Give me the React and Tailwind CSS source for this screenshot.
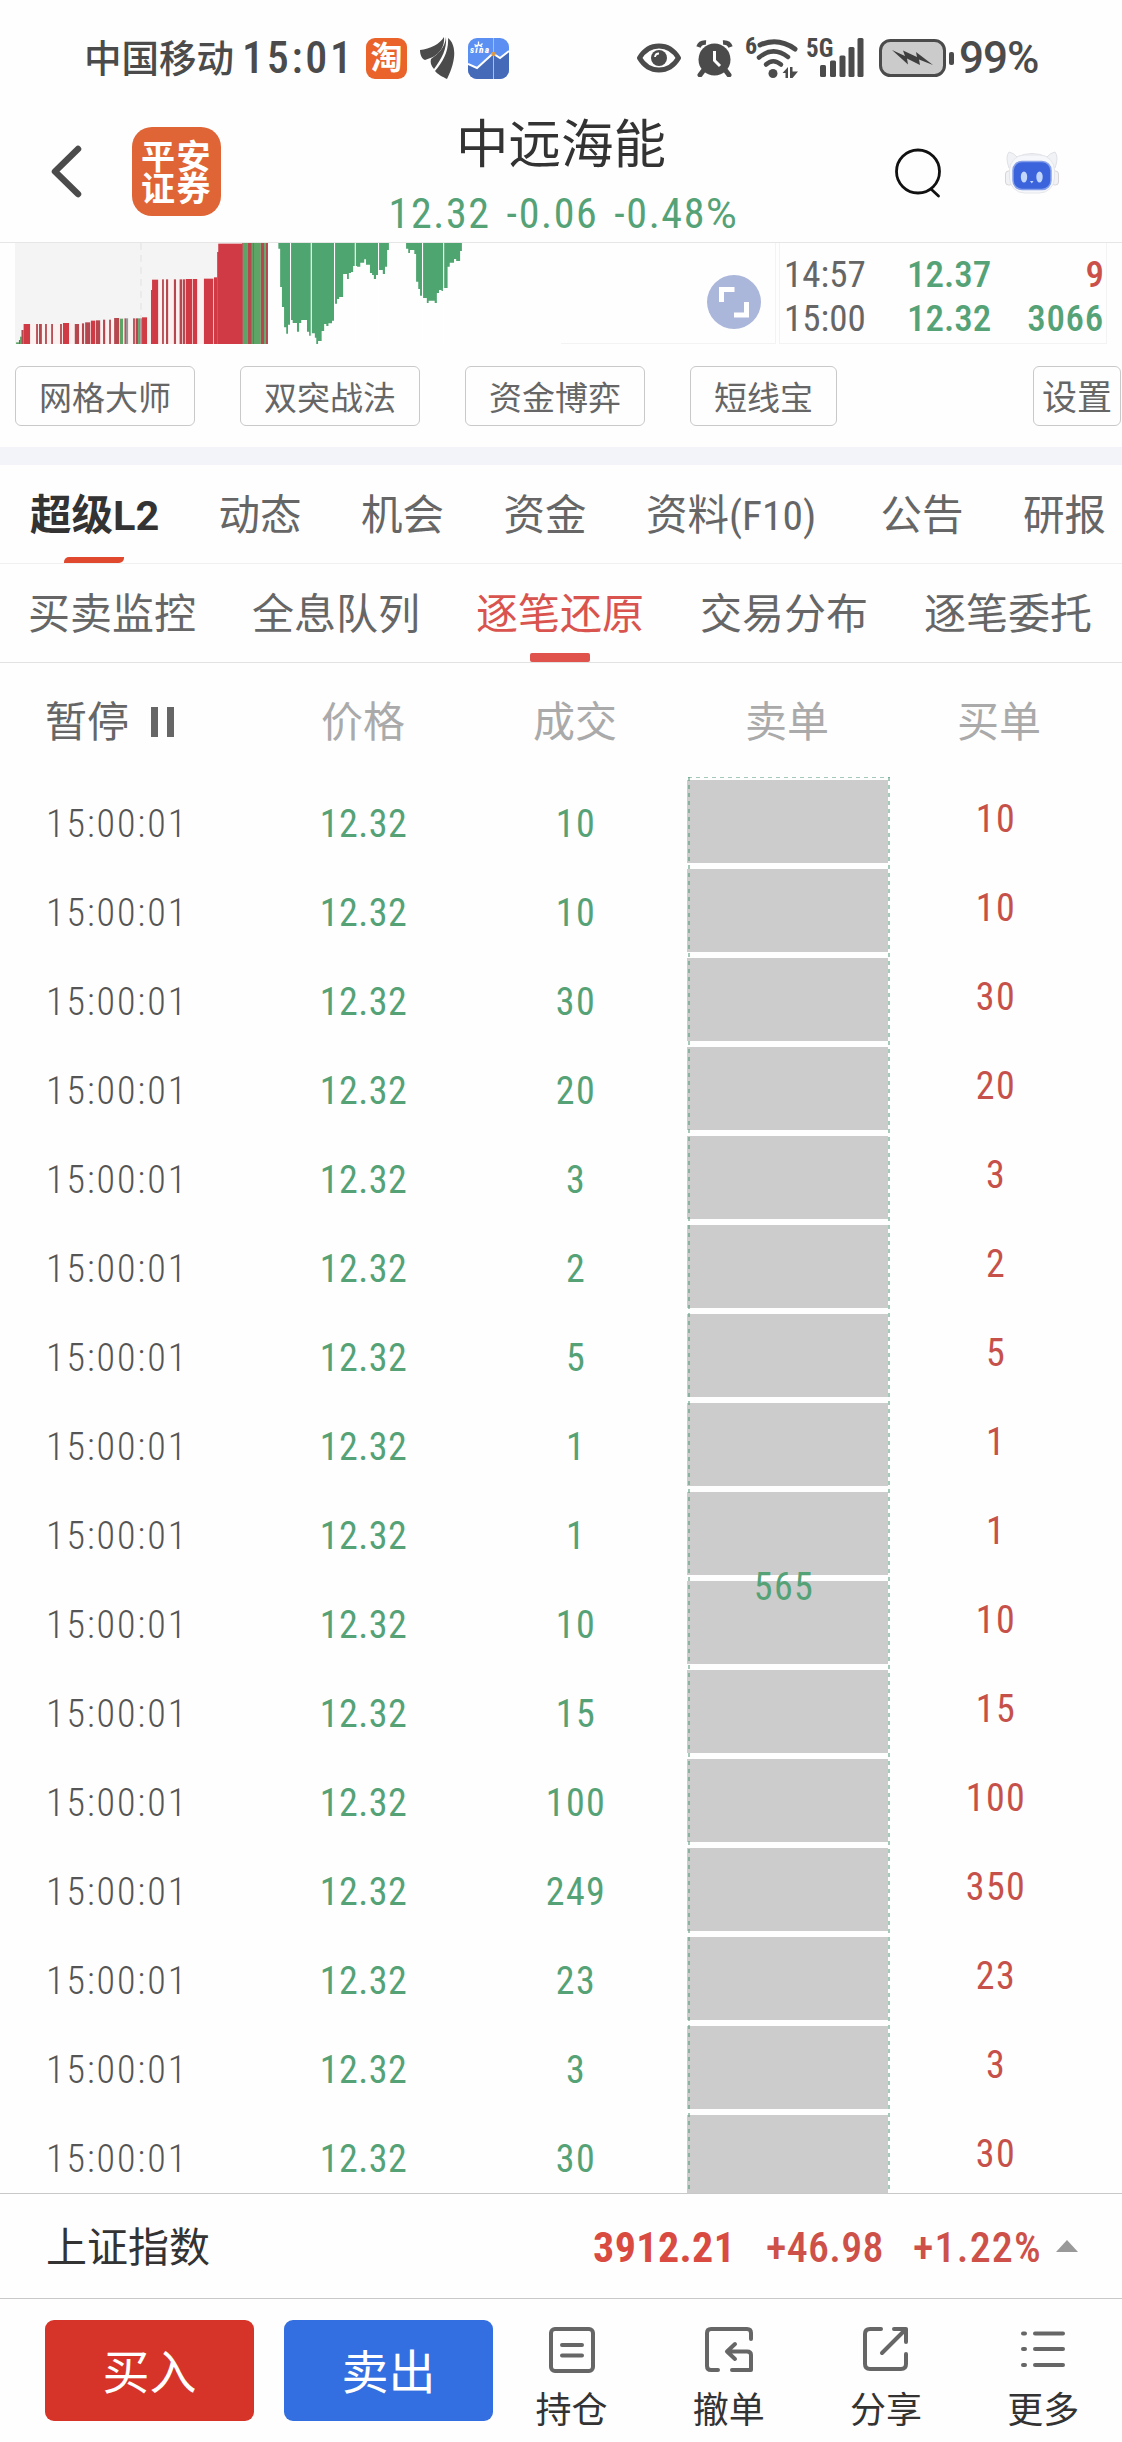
const RED = '#cf3a44';
const GREEN = '#5da567';
const DARK_RED = '#b5484f';
const GRAY = '#9c9396';

// [x, width, top, color]
const volumeBars = [
    [45, 8, 337, GREEN],
    [53, 4, 330, DARK_RED],
    [56, 5, 320, GREEN],
    [60, 6, 300, DARK_RED],
    [66, 18, 282, RED],
    [101, 5, 282, DARK_RED],
    [109, 8, 282, DARK_RED],
    [126, 5, 282, DARK_RED],
    [143, 5, 282, DARK_RED],
    [168, 5, 282, DARK_RED],
    [176, 17, 279, RED],
    [209, 12, 282, DARK_RED],
    [229, 6, 280, DARK_RED],
    [238, 14, 277, DARK_RED],
    [254, 12, 272, RED],
    [268, 12, 271, DARK_RED],
    [288, 6, 269, DARK_RED],
    [305, 5, 269, DARK_RED],
    [319, 14, 264, DARK_RED],
    [335, 9, 266, GREEN],
    [348, 4, 265, DARK_RED],
    [352, 6, 265, GRAY],
    [372, 5, 265, DARK_RED],
    [379, 7, 265, DARK_RED],
    [386, 6, 265, GREEN],
    [392, 5, 265, GRAY],
    [397, 14, 262, RED],
    [422, 4, 180, RED],
    [425, 17, 149, RED],
    [453, 5, 148, DARK_RED],
    [464, 6, 148, DARK_RED],
    [486, 6, 148, DARK_RED],
    [502, 7, 148, DARK_RED],
    [511, 6, 148, DARK_RED],
    [519, 18, 147, RED],
    [539, 12, 147, RED],
    [570, 26, 146, RED],
    [598, 9, 142, RED],
    [607, 5, 66, RED],
    [610, 68, 41, RED],
    [677, 3, 39, DARK_RED],
    [679, 14, 39, GREEN],
    [693, 11, 39, DARK_RED],
    [704, 4, 39, GREEN],
    [707, 3, 39, DARK_RED],
    [709, 20, 39, GREEN],
    [729, 9, 39, DARK_RED],
    [738, 5, 39, GREEN],
    [743, 6, 39, DARK_RED],
];

const dividers = [812, 870, 935, 993, 1058, 1181, 1240];

const quickTools = ['网格大师', '双突战法', '资金博弈', '短线宝'];
const mainTabs = ['超级L2', '动态', '机会', '资金', '资料(F10)', '公告', '研报'];
const subTabs = ['买卖监控', '全息队列', '逐笔还原', '交易分布', '逐笔委托'];

const trades = [
    { deal: 10, buy: 10 },
    { deal: 10, buy: 10 },
    { deal: 30, buy: 30 },
    { deal: 20, buy: 20 },
    { deal: 3, buy: 3 },
    { deal: 2, buy: 2 },
    { deal: 5, buy: 5 },
    { deal: 1, buy: 1 },
    { deal: 1, buy: 1 },
    { deal: 10, buy: 10 },
    { deal: 15, buy: 15 },
    { deal: 100, buy: 100 },
    { deal: 249, buy: 350 },
    { deal: 23, buy: 23 },
    { deal: 3, buy: 3 },
    { deal: 30, buy: 30 },
];

const StatusBar = () => (
    <div className="flex h-[116px] items-center pl-[84px] text-[#4b4b4b]">
        <span className="w-[158px] pt-[2px] text-[37.5px] leading-[44px] font-medium">中国移动</span>
        <span className="w-[124px] text-[44px] leading-[44px] font-medium tracking-[2.7px]">15:01</span>
        <div className="flex h-[41px] w-[41px] items-center justify-center rounded-[9px] bg-[#e9632b] text-[32px] leading-[34px] font-bold text-white">
            淘
        </div>
        <svg className="ml-[13px] h-[42px] w-[36px]" viewBox="0 0 36 42" fill="#4b4b4b">
            <path d="M0 13 C10 12 20 7 24 0 C25 9 20 16 13 20 L5 23 C2 22 0 18 0 13Z" />
            <path d="M26 0 C27 12 22 21 14 32 C11 29 10 25 11 22 C18 17 25 11 26 0Z" />
            <path d="M28 1 C36 7 37 22 27 42 C23 40 17 37 15 34 C23 25 29 14 28 1Z" />
        </svg>
        <svg className="ml-[12px] h-[41px] w-[41px] rounded-[9px]" viewBox="0 0 41 41">
            <rect width="41" height="41" fill="#5b8ff2" />
            <path d="M0 26 L9 30 L25 15.500 L32 20 L41 13 V41 H0Z" fill="#456bb8" />
            <path d="M0 26 L9 30 L25 15.500 L32 20 L41 13" fill="none" stroke="#fff" strokeWidth="2" />
            <path d="M25.500 0 V41" stroke="#b9bccb" strokeWidth="1" />
            <circle cx="25.500" cy="16" r="2.300" fill="#d99a4e" />
            <path d="M6.500 6.500 L8.500 8 M10.500 3.500 V6.500 M14.500 5.500 L12.500 7.500 M7 9 Q10.500 5 14 9" fill="none" stroke="#fff" strokeWidth="1.300" />
            <text x="2" y="15" fill="#fff" fontSize="9.500" fontWeight="800" fontStyle="italic" textLength="19">
                sina
            </text>
        </svg>
        <svg className="ml-[128px] h-[30px] w-[44px]" viewBox="0 0 44 30">
            <path
                d="M2.500 15 C12 -1 32 -1 41.500 15 C32 31 12 31 2.500 15Z"
                fill="none"
                stroke="#4b4b4b"
                strokeWidth="5"
                strokeLinejoin="round"
            />
            <circle cx="22" cy="15" r="8" fill="#4b4b4b" />
            <path d="M18 14 A4 4 0 0 1 22 10.500" fill="none" stroke="#fff" strokeWidth="1.800" />
        </svg>
        <svg className="ml-[15px] h-[37px] w-[37px]" viewBox="0 0 37 37">
            <circle cx="18.500" cy="19.500" r="16" fill="#4b4b4b" />
            <path d="M7 31 L4 35 M30 31 L33 35" stroke="#4b4b4b" strokeWidth="5" strokeLinecap="round" />
            <path d="M2.500 7 Q4 2 10 2.500 M34.500 7 Q33 2 27 2.500" fill="none" stroke="#4b4b4b" strokeWidth="4.500" />
            <path d="M18.500 11 V20.500 L24 26" fill="none" stroke="#fff" strokeWidth="3" />
        </svg>
        <svg className="ml-[12px] h-[42px] w-[54px] overflow-visible" viewBox="0 0 54 42" fill="none" stroke="#4b4b4b">
            <text x="0" y="17" fill="#4b4b4b" stroke="none" fontSize="24" fontWeight="700">
                6
            </text>
            <path d="M15 8 Q33 0 50 12" strokeWidth="5" strokeLinecap="round" />
            <path d="M14 20.500 Q28 8.500 43 20" strokeWidth="4.500" strokeLinecap="round" />
            <path d="M21 27.500 Q28 21 36 27.500" strokeWidth="4.500" strokeLinecap="round" />
            <circle cx="28" cy="36.500" r="4.500" fill="#4b4b4b" stroke="none" />
            <path d="M37.500 36 L43 30 V41 H40.500 V36Z M45 30 H47.500 V34.500 H53 L47.500 41 H45Z" fill="#4b4b4b" stroke="none" />
        </svg>
        <svg className="ml-[8px] h-[42px] w-[58px] overflow-visible" viewBox="0 0 58 42" fill="#4b4b4b">
            <text x="-1" y="20" fontSize="25" fontWeight="700">
                5G
            </text>
            <rect x="13" y="28" width="6" height="12" rx="1.500" />
            <rect x="23" y="23.500" width="6" height="16.500" rx="1.500" />
            <rect x="32.500" y="18.500" width="6" height="21.500" rx="1.500" />
            <rect x="41.500" y="10" width="6" height="30" rx="1.500" />
            <rect x="50.500" y="1" width="6" height="39" rx="1.500" />
        </svg>
        <svg className="ml-[14px] h-[38px] w-[76px]" viewBox="0 0 76 38">
            <rect x="1.500" y="1.500" width="64" height="35" rx="10" fill="#cbcbcb" stroke="#4b4b4b" strokeWidth="3" />
            <rect x="70" y="13" width="5" height="13" rx="2" fill="#4b4b4b" />
            <path d="M13 11 L26 17 L24 11.500 L38 18 L37 13 L54 26 L40 20.500 L41 26 L28 19.500 L29 25.500Z" fill="#3f3f3f" />
        </svg>
        <span className="ml-[4px] text-[44px] leading-[44px] font-medium tracking-[-1px] font-stretch-100%">99%</span>
    </div>
);

const RobotIcon = () => (
    <svg className="h-[44px] w-[54px]" viewBox="0 0 54 44">
        <path
            d="M4 18 Q0 7 4 2 Q9 3 12 7 Q27 0 42 7 Q45 3 50 2 Q54 7 50 18 Z"
            fill="#f0f2f6"
            stroke="#dfe1e7"
            strokeWidth="1"
        />
        <rect x=".5" y="21" width="7" height="14" rx="3" fill="#f1f2f5" stroke="#d8d4d8" strokeWidth="1" />
        <rect x="46.500" y="21" width="7" height="14" rx="3" fill="#f1f2f5" stroke="#d8d4d8" strokeWidth="1" />
        <rect x="4.500" y="5" width="45" height="38" rx="15" fill="#f6f7fa" stroke="#e4e6eb" strokeWidth="1" />
        <rect x="8" y="11.500" width="38" height="28" rx="9" fill="#3a63dc" stroke="#86a0ea" strokeWidth="1.500" />
        <ellipse cx="19" cy="27" rx="3.200" ry="5.500" fill="#c3d6fb" />
        <ellipse cx="34.500" cy="27" rx="3.200" ry="5.500" fill="#c3d6fb" />
        <path d="M25 31 H28.500 L26.800 33.500Z" fill="#c3d6fb" />
    </svg>
);

const Header = () => (
    <div className="flex h-[127px] border-b border-[#e6e6e6]">
        <svg className="mt-[29px] ml-[50px] h-[53px] w-[33px]" viewBox="0 0 33 53" fill="none">
            <path d="M28 4 L5 26.500 L28 49" stroke="#4b4b4b" strokeWidth="6.500" strokeLinecap="round" strokeLinejoin="round" />
        </svg>
        <div className="mt-[11px] ml-[49px] h-[89px] w-[89px] rounded-[20px] bg-[#df6536] pt-[14px] pl-[9px] text-[34px] leading-[32px] font-bold tracking-[1.5px] text-white">
            平安证券
        </div>
        <div className="ml-[119px] flex w-[442px] flex-col items-center">
            <h1 className="mt-px text-[52.5px] leading-[56px] text-[#333]">中远海能</h1>
            <p className="mt-[19px] flex gap-[16px] pl-[5px] text-[42px] leading-[44px] tracking-[1.6px] text-[#55a277]">
                <span>12.32</span>
                <span>-0.06</span>
                <span>
                    -0.48<span className="font-stretch-100%">%</span>
                </span>
            </p>
        </div>
        <svg className="mt-[32px] ml-[111px] h-[50px] w-[50px]" viewBox="0 0 50 50" fill="none" stroke="#111" strokeWidth="2.800">
            <circle cx="25" cy="23.500" r="21.500" />
            <path d="M38.500 41.500 L45.500 48" strokeLinecap="round" />
        </svg>
        <div className="mt-[34px] ml-[62px]">
            <RobotIcon />
        </div>
    </div>
);

const ChartStrip = () => (
    <div className="flex h-[102px]">
        <svg className="h-[101px] w-[561px]" viewBox="0 39 1568 303" preserveAspectRatio="none">
            <rect x="42" y="39" width="707" height="303" fill="#f4f4f4" />
            <rect x="66" y="282" width="345" height="60" fill="#fbf1f1" />
            <rect x="440" y="148" width="167" height="194" fill="#fbf1f1" />
            <path d="M394 39 V265" stroke="#e9e9e9" strokeWidth="5" strokeDasharray="20 16" />
            {volumeBars.map(([x, w, top, color]) => (
                <rect key={x} x={x} y={top} width={w} height={342 - top} fill={color} />
            ))}
            <path
                d="M778 39 V56 H783 V171 H788 V231 H794 V292 H800 V311 H805 V284 H811 V270 H818 V279 H830 V305 H836 V279 H842 V270 H858 V305 H864 V317 H870 V310 H880 V323 H884 V342 H889 V333 H899 V303 H906 V282 H912 V288 H918 V280 H928 V272 H935 V221 H942 V207 H948 V201 H959 V132 H970 V147 H975 V129 H981 V126 H987 V108 H998 V110 H1007 V98 H1018 V88 H1023 V104 H1034 V129 H1040 V135 H1045 V147 H1051 V135 H1058 V120 H1070 V132 H1076 V110 H1082 V60 H1087 V39Z"
                fill="#4fa56f"
            />
            <path
                d="M1135 39 V56 H1141 V69 H1146 V60 H1158 V72 H1163 V155 H1169 V177 H1174 V197 H1181 V204 H1193 V219 H1198 V212 H1215 V219 H1221 V189 H1227 V180 H1234 V183 H1238 V174 H1251 V110 H1257 V98 H1269 V87 H1275 V93 H1286 V63 H1291 V39Z"
                fill="#4fa56f"
            />
            {dividers.map((x) => (
                <path key={x} d={`M${x} 39 V340`} stroke="#fff" strokeWidth="3" />
            ))}
        </svg>
        <div className="h-[101px] w-[215px] border-r border-b border-[#f3f3f3]">
            <svg className="mt-[32px] ml-[146px] h-[54px] w-[54px]" viewBox="0 0 54 54" fill="none">
                <circle cx="27" cy="27" r="27" fill="#aab6da" />
                <path d="M14.500 27 V14.500 H27.500 M27 40 H39.500 V27" stroke="#fff" strokeWidth="5" />
            </svg>
        </div>
        <div className="ml-[3px] grid h-[101px] w-[328px] grid-cols-[123px_1fr_1fr] content-start border-r border-b border-l border-[#f3f3f3] pt-[10px] pr-[2px] pl-[4px] text-[37px] leading-[44px]">
            <span className="text-[#666]">14:57</span>
            <span className="font-medium text-[#55a277]">12.37</span>
            <span className="text-right font-medium text-[#cb5049]">9</span>
            <span className="text-[#666]">15:00</span>
            <span className="font-medium text-[#55a277]">12.32</span>
            <span className="text-right font-medium tracking-[.7px] text-[#55a277]">3066</span>
        </div>
    </div>
);

const QuickTools = () => (
    <div className="flex h-[102px] items-start pt-[21px] pl-[15px] text-[33px] text-[#666]">
        {quickTools.map((tool) => (
            <button key={tool} className="mr-[45px] h-[60px] rounded-[6px] border border-[#c9c9c9] px-[23px] pt-[5px] leading-[54px]">
                {tool}
            </button>
        ))}
        <button className="mr-[1px] ml-auto h-[60px] w-[88px] rounded-[6px] border border-[#c9c9c9] pt-[5px] text-[35px] leading-[54px]">
            设置
        </button>
    </div>
);

const MainTabs = () => (
    <div className="flex h-[99px] gap-[59.5px] border-b border-[#f0f0f0] pl-[30px] text-[41.5px] leading-[102px] whitespace-nowrap text-[#666]">
        {mainTabs.map((tab, index) => (
            <div key={tab} className={index === 0 ? 'relative w-[129px] font-bold text-[#333] font-stretch-100%' : 'relative last:pl-0 nth-5:w-[175px]'}>
                {tab}
                {index === 0 && (
                    <span className="absolute bottom-0 left-[34px] h-[6px] w-[60px] rounded-tl-[5px] rounded-br-[5px] bg-[#e0492d]" />
                )}
            </div>
        ))}
    </div>
);

const SubTabs = () => (
    <div className="flex h-[99px] gap-[56px] border-b border-[#e2e2e2] pl-[28px] text-[42px] leading-[102px] whitespace-nowrap text-[#666]">
        {subTabs.map((tab) => (
            <div key={tab} className={tab === '逐笔还原' ? 'relative text-[#d9544e]' : 'relative'}>
                {tab}
                {tab === '逐笔还原' && (
                    <span className="absolute bottom-0 left-[54px] h-[9px] w-[60px] rounded-[2px] bg-[#e0524c]" />
                )}
            </div>
        ))}
    </div>
);

const TradeTable = () => (
    <div className="h-[1530px] overflow-hidden">
        <div className="grid h-[114px] grid-cols-[257px_repeat(4,212px)] text-center text-[42px] leading-[120px] text-[#aaa]">
            <div className="flex items-center pl-[45px] text-[#666]">
                暂停
                <span className="mb-[3px] ml-[22px] h-[30px] w-[23px] border-x-[7px] border-[#666]" />
            </div>
            <div>价格</div>
            <div>成交</div>
            <div>卖单</div>
            <div>买单</div>
        </div>
        <div className="flex text-[38px] tracking-[1.4px]">
            <div className="w-[682px] pt-[2px]">
                {trades.map((trade, index) => (
                    <div key={index} className="grid h-[89px] grid-cols-[257px_212px_212px] text-center leading-[91px] text-[#55a277]">
                        <span className="pl-[46px] text-left font-light tracking-[2px] text-[#555]">15:00:01</span>
                        <span className="pl-[1px] tracking-[.5px]">12.32</span>
                        <span className="pl-[2px]">{trade.deal}</span>
                    </div>
                ))}
            </div>
            {/* merged sell order, runs past the bottom of the list */}
            <div className="relative mr-[4px] ml-[5px] h-[1618px] w-[203px] pt-[3px]">
                {trades.map((trade, index) => (
                    <div key={index} className="mb-[6px] h-[83px] w-[201px] bg-[#ccc]" />
                ))}
                <div className="absolute top-0 left-[1px] h-px w-[202px] bg-[repeating-linear-gradient(to_right,#a5c9b9_0_4px,transparent_4px_8px)]" />
                <div className="absolute top-0 left-[1px] h-full w-[2px] bg-[repeating-linear-gradient(to_bottom,#4b967380_0_4px,transparent_4px_8px)]" />
                <div className="absolute top-0 right-0 h-full w-[2px] bg-[repeating-linear-gradient(to_bottom,#4b967380_0_4px,transparent_4px_8px)]" />
                <span className="absolute inset-0 flex items-center justify-center pt-[2px] pr-[9px] text-[#55a277]">565</span>
            </div>
            <div className="w-[204px] pt-[2px] text-center text-[#c6514a]">
                {trades.map((trade, index) => (
                    <div key={index} className="h-[89px] leading-[80px]">
                        {trade.buy}
                    </div>
                ))}
            </div>
        </div>
    </div>
);

const IndexBar = () => (
    <div className="flex h-[106px] items-center border-y border-[#c8c8c8] pt-[3px] pl-[46px] text-[42px] font-medium text-[#cd5149]">
        <span className="w-[547px] pt-[2px] text-[41px] font-normal text-[#333]">上证指数</span>
        <span className="w-[173px] font-bold tracking-[.4px] text-[#d94a40]">3912.21</span>
        <span className="w-[147px] tracking-[.3px]">+46.98</span>
        <span className="tracking-[1.2px]">+1.22%</span>
        <svg className="mr-[44px] mb-[3px] ml-auto h-[12px] w-[22px]" viewBox="0 0 22 12">
            <path d="M11 0 L22 12 H0Z" fill="#999" />
        </svg>
    </div>
);

const NavItem = ({ label, children }) => (
    <div className="flex flex-1 flex-col items-center pt-[27px]">
        <svg className="h-[48px] w-[48px]" viewBox="0 0 48 48" fill="none" stroke="#666" strokeWidth="4" strokeLinecap="round" strokeLinejoin="round">
            {children}
        </svg>
        <span className="mt-[13px] text-[36px] leading-[48px] text-[#333]">{label}</span>
    </div>
);

const BottomBar = () => (
    <div className="flex h-[143px]">
        <button className="mt-[21px] ml-[45px] h-[101px] w-[209px] rounded-[9px] bg-[#d63429] pt-[5px] text-[47px] text-white">买入</button>
        <button className="mt-[21px] ml-[30px] h-[101px] w-[209px] rounded-[9px] bg-[#336fe0] pt-[5px] text-[47px] text-white">卖出</button>
        <NavItem label="持仓">
            <rect x="3" y="3" width="42" height="42" rx="4" />
            <path d="M14 19 H34 M14 29.500 H34" />
        </NavItem>
        <NavItem label="撤单">
            <path d="M46 13 V7 Q46 3 42 3 H6 Q2 3 2 7 V40 Q2 44 6 44 H13" />
            <path d="M27 44 H46 V29 Q46 25.500 42 25.500 H22 M30 18 L22 25.500 L30 33" />
        </NavItem>
        <NavItem label="分享">
            <path d="M19 3 H8 Q3 3 3 8 V38 Q3 43 8 43 H39 Q44 43 44 38 V28" />
            <path d="M20 27 L44 3 M32 3 H44 V16" />
        </NavItem>
        <NavItem label="更多">
            <path d="M4 7.500 H6 M16 7.500 H44 M4 23 H6 M16 23 H44 M4 39 H6 M16 39 H44" />
        </NavItem>
    </div>
);

const App = () => {
    return (
        <div className="h-[2442px] w-[1122px] overflow-hidden bg-[#fefefe] font-['Roboto','Noto_Sans_CJK_SC',sans-serif] font-stretch-75%">
            <StatusBar />
            <Header />
            <ChartStrip />
            <QuickTools />
            <div className="h-[18px] bg-[#f3f4f9]" />
            <MainTabs />
            <SubTabs />
            <TradeTable />
            <IndexBar />
            <BottomBar />
        </div>
    );
};

export default App;
